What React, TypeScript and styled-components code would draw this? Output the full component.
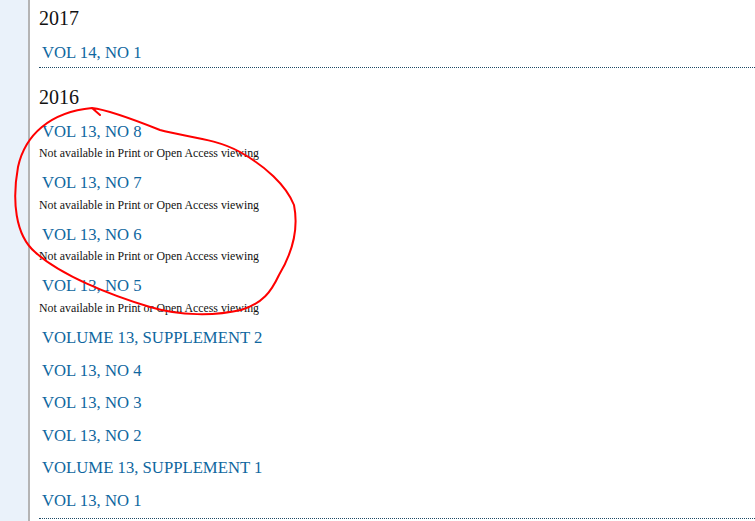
import styled, { createGlobalStyle } from 'styled-components';

const GlobalStyle = createGlobalStyle`
  html, body {
    margin: 0;
    padding: 0;
    background: #ffffff;
  }
  body {
    font-family: "Liberation Serif", "Times New Roman", serif;
    overflow: hidden;
  }
`;

type Issue = { title: string; note?: boolean };
type Year = { year: string; issues: Issue[] };

const archive: Year[] = [
  { year: '2017', issues: [{ title: 'VOL 14, NO 1' }] },
  {
    year: '2016',
    issues: [
      { title: 'VOL 13, NO 8', note: true },
      { title: 'VOL 13, NO 7', note: true },
      { title: 'VOL 13, NO 6', note: true },
      { title: 'VOL 13, NO 5', note: true },
      { title: 'VOLUME 13, SUPPLEMENT 2' },
      { title: 'VOL 13, NO 4' },
      { title: 'VOL 13, NO 3' },
      { title: 'VOL 13, NO 2' },
      { title: 'VOLUME 13, SUPPLEMENT 1' },
      { title: 'VOL 13, NO 1' },
    ],
  },
];

const Page = styled.div`
  position: relative;
  display: flex;
  width: 755px;
  height: 521px;
  overflow: hidden;
`;

const Sidebar = styled.aside`
  flex: 0 0 28px;
  background: #eaf2fa;
  border-right: 2px solid #b4b4b4;
`;

const Content = styled.main`
  flex: 1;
  padding: 0 0 0 9px;
`;

const YearSection = styled.section`
  padding-top: 17px;
  border-bottom: 1px dotted #1d4a66;

  &:first-child {
    padding-top: 6px;
  }
`;

const YearHeading = styled.h2`
  margin: 0 0 7px;
  font-size: 20px;
  line-height: 24px;
  font-weight: normal;
  color: #111;
`;

const IssueList = styled.ul`
  list-style: none;
  margin: 0;
  padding: 0;
`;

const IssueItem = styled.li`
  padding: 6px 0;

  &:only-child {
    padding-bottom: 3px;
  }
`;

const IssueLink = styled.a`
  display: block;
  padding-left: 3px;
  font-size: 16.7px;
  line-height: 20.6px;
  color: #0f67a0;
  text-decoration: none;
`;

const Note = styled.div`
  margin-top: 3px;
  font-size: 11.85px;
  line-height: 16px;
  color: #111;
`;

const Annotation = styled.svg`
  position: absolute;
  left: 0;
  top: 0;
  pointer-events: none;
`;

export default function App() {
  return (
    <>
      <GlobalStyle />
      <Page>
        <Sidebar />
        <Content>
          {archive.map((y) => (
            <YearSection key={y.year}>
              <YearHeading>{y.year}</YearHeading>
              <IssueList>
                {y.issues.map((issue) => (
                  <IssueItem key={issue.title}>
                    <IssueLink href="#">{issue.title}</IssueLink>
                    {issue.note && <Note>Not available in Print or Open Access viewing</Note>}
                  </IssueItem>
                ))}
              </IssueList>
            </YearSection>
          ))}
        </Content>
        <Annotation width="755" height="521" viewBox="0 0 755 521">
          <path
            d="M100 115 L92 108 C110 110 140 122 160 130 C185 137 215 138 240 152 C265 166 286 185 294 205 C299 230 291 255 279 275 C271 292 263 303 241 310 C215 316 180 316 150 307 C110 295 60 275 35 252 C15 235 12 200 18 167 C25 135 50 112 92 108"
            fill="none"
            stroke="#f00"
            strokeWidth="2"
            strokeLinecap="round"
            strokeLinejoin="round"
          />
        </Annotation>
      </Page>
    </>
  );
}
